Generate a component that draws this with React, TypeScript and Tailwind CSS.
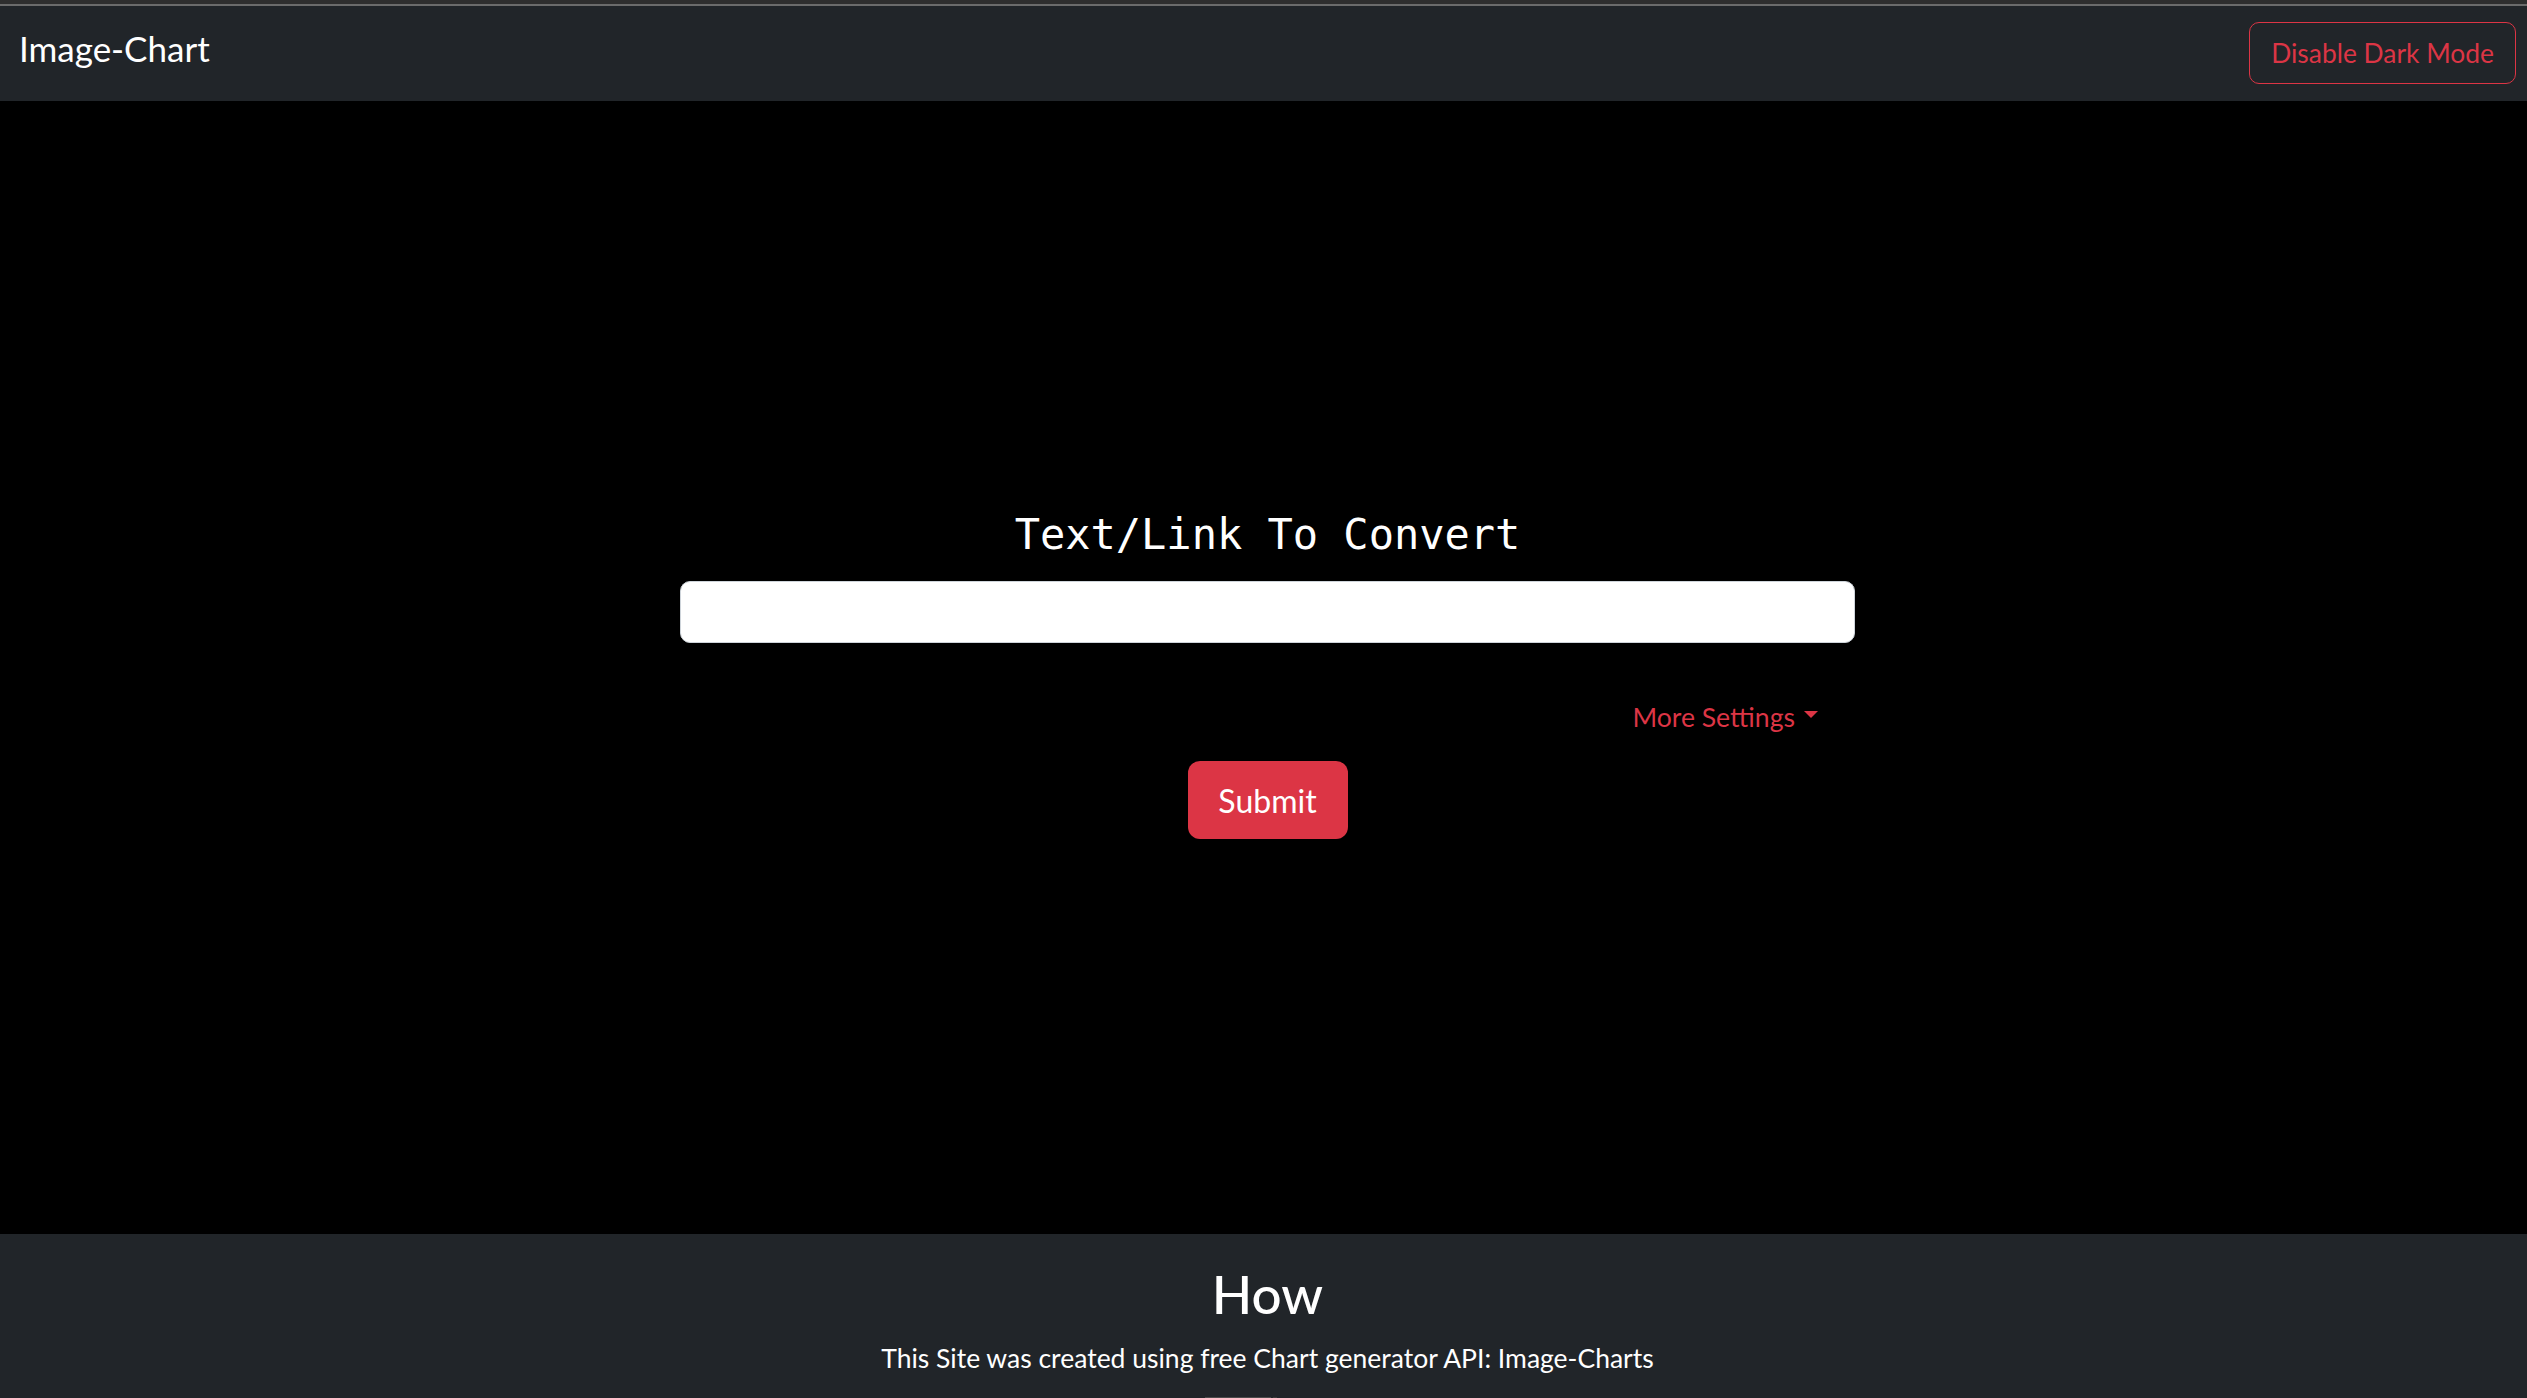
import React from 'react';

const sans = "font-['Lato','Open_Sans',sans-serif]";

export default function App() {
  return (
    <div className="w-full h-[1398px] overflow-hidden bg-black">
      <div className={`w-[2535px] h-[1398px] flex flex-col ${sans}`}>
        {/* browser strip */}
        <div className="h-[4px] bg-[#2e2e2e]" />
        <div className="h-[2px] bg-[#6b6b6b]" />

        {/* Navbar */}
        <nav className="h-[95px] bg-[#212529] flex items-start justify-between px-[19px]">
          <a className="mt-[22px] text-[35px] leading-[40px] text-white">Image-Chart</a>
          <button className="mt-[16px] h-[62px] px-[21px] rounded-[10px] border border-[#dc3545] text-[#dc3545] text-[26.4px] leading-[38px]">
            Disable Dark Mode
          </button>
        </nav>

        {/* Form */}
        <main className="h-[1133px] bg-black flex flex-col items-center pt-[409px]">
          <h3 className="font-['DejaVu_Sans_Mono',monospace] text-[42px] leading-[50px] text-white">
            Text/Link To Convert
          </h3>
          <input
            type="text"
            className="mt-[21px] w-[1175px] h-[62px] rounded-[10px] bg-white border border-[#ced4da] px-4 text-[25.6px] outline-none"
          />
          <div className="mt-[55px] w-[1175px] flex justify-end pr-[37px]">
            <a className="flex items-center text-[#dc3545] text-[26.6px] leading-[38px]">
              More Settings
              <span className="ml-[9px] mb-[6px] w-0 h-0 border-x-[7px] border-x-transparent border-t-[7px] border-t-[#dc3545]" />
            </a>
          </div>
          <button className="mt-[25px] w-[160px] h-[78px] rounded-[12px] bg-[#dc3545] text-white text-[32px] leading-[48px] pt-[1px]">
            Submit
          </button>
        </main>

        {/* How */}
        <footer className="flex-1 bg-[#212529] flex flex-col items-center pt-[29px]">
          <h2 className="text-[53px] leading-[62px] font-medium text-white">How</h2>
          <p className="mt-[14px] text-[26.5px] leading-[38px] text-white">
            This Site was created using free Chart generator API: Image-Charts
          </p>
          <div className="mt-auto self-start ml-[1205px] flex gap-[2px]">
            <div className="w-[66px] h-[1px] bg-[#4b4b4b]" />
            <div className="w-[4px] h-[1px] bg-[#3a3a3a]" />
          </div>
        </footer>
      </div>
    </div>
  );
}
